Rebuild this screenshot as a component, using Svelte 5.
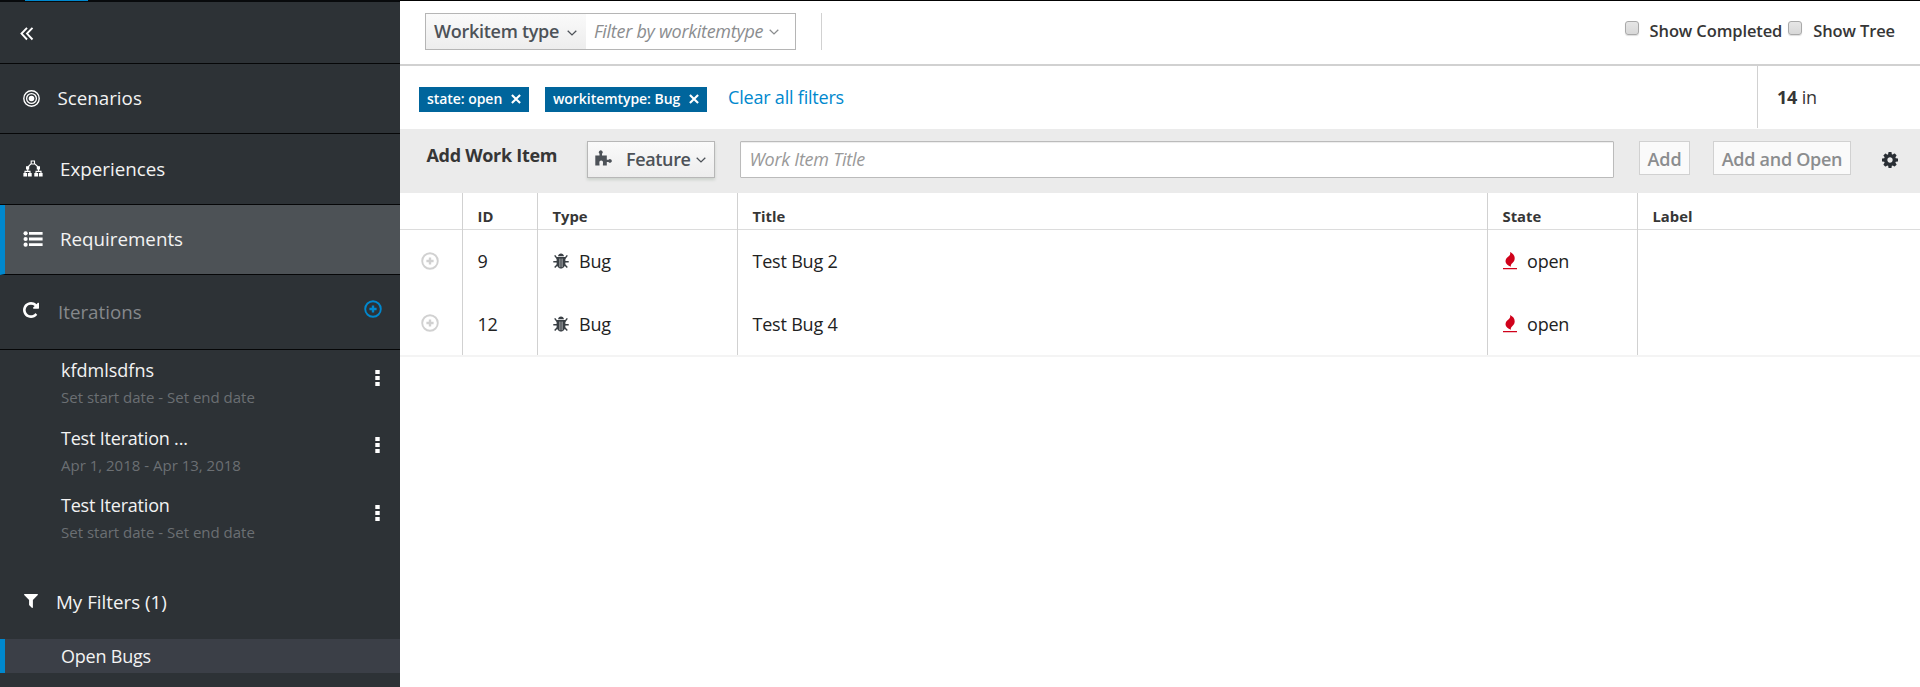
<script>
  const nav = [
    { icon: 'target', label: 'Scenarios', gap: 17.5, h: 69 },
    { icon: 'tree', label: 'Experiences', gap: 17, h: 70 },
    { icon: 'list', label: 'Requirements', gap: 17, h: 69, active: true },
  ];
  const iterations = [
    { name: 'kfdmlsdfns', dates: 'Set start date - Set end date', h: 68, tight: 0 },
    { name: 'Test Iteration ...', dates: 'Apr 1, 2018 - Apr 13, 2018', h: 67, tight: -0.2 },
    { name: 'Test Iteration', dates: 'Set start date - Set end date', h: 68, tight: -0.2 },
  ];
  const rows = [
    { id: 9, type: 'Bug', title: 'Test Bug 2', state: 'open' },
    { id: 12, type: 'Bug', title: 'Test Bug 4', state: 'open' },
  ];
  const chips = ['state: open', 'workitemtype: Bug'];
</script>

{#snippet chevron()}
  <svg class="chev" width="10" height="6" viewBox="0 0 10 6"><path d="M.7.7 5 4.9 9.3.7" fill="none" stroke="currentColor" stroke-width="1.3" /></svg>
{/snippet}

{#snippet plus()}
  <svg width="18" height="18" viewBox="0 0 18 18"><circle cx="9" cy="9" r="7.8" fill="none" stroke="currentColor" stroke-width="1.9" /><path d="M9 5.4v7.2M5.4 9h7.2" stroke="currentColor" stroke-width="2.4" /></svg>
{/snippet}

<div class="page">
  <aside>
    <div class="strip"><span></span></div>
    <div class="collapse">
      <svg width="14" height="14" viewBox="0 0 14 14"><path d="M7 .8 1.500 6.600 7 12.500M12.500.800 7 6.600l5.500 5.900" fill="none" stroke="#fff" stroke-width="1.900" /></svg>
    </div>
    {#each nav as n}
      <div class="nav" class:active={n.active} style="height:{n.h}px">
        {#if n.icon === 'target'}
          <svg width="17" height="17" viewBox="0 0 17 17"><g fill="none" stroke="#fff"><circle cx="8.500" cy="8.500" r="7.700" stroke-width="1.400" /><circle cx="8.500" cy="8.500" r="4.900" stroke-width="1.300" /></g><circle cx="8.500" cy="8.500" r="2.800" fill="#fff" /></svg>
        {:else if n.icon === 'tree'}
          <svg width="20" height="17" viewBox="0 0 20 17"><g fill="none" stroke="#fff" stroke-width="1.100"><path d="M8.200 1h3.300v3H8.200zM8.200 3.700 4.900 7M11.500 3.700 15.200 7M4.700 8v3M2 13.500V11.400h5v2.100M15.500 8v3M13 13.500v-2.100h5v2.100" /></g><g fill="#fff"><path d="M3 6.200h3.200v3.200H3zM13.800 6.200H17v3.200h-3.200zM.4 13h3.700v3.400H.4zM5 13h3.700v3.400H5zM11.300 13H15v3.400h-3.700zM15.900 13h3.700v3.400h-3.700z" /></g></svg>
        {:else}
          <svg width="20" height="16" viewBox="0 0 20 16"><g fill="#fff"><circle cx="2.600" cy="2.300" r="2.100" /><circle cx="2.600" cy="8" r="2.100" /><circle cx="2.600" cy="13.700" r="2.100" /><path d="M6 1h13.600v2.800H6zM6 6.600h13.600v2.800H6zM6 12.200h13.600V15H6z" /></g></svg>
        {/if}
        <span style="margin-left:{n.gap}px">{n.label}</span>
      </div>
    {/each}
    <div class="nav iter">
      <svg width="16" height="16" viewBox="128 128 1536 1536"><path fill="#fff" d="M1664 256v448q0 26-19 45t-45 19h-448q-42 0-59-40-17-39 14-69l138-138q-148-137-349-137-104 0-198.500 40.500t-163.500 109.500-109.500 163.500-40.500 198.500 40.500 198.500 109.500 163.500 163.500 109.500 198.500 40.500q119 0 225-52t179-147q7-10 23-12 15 0 25 9l137 138q9 8 9.500 20.500t-7.500 22.500q-109 132-264 204.500t-327 72.500q-156 0-298-61t-245-164-164-245-61-298 61-298 164-245 245-164 298-61q147 0 284.500 55.500t244.500 156.500l130-129q29-31 70-14 39 17 39 59z" /></svg>
      <span>Iterations</span>
      <i>{@render plus()}</i>
    </div>
    {#each iterations as it, k}
      <div class="it" style="height:{it.h}px">
        <div>
          <p style="letter-spacing:{it.tight}px">{it.name}</p>
          <small>{it.dates}</small>
        </div>
        <svg class:mid={k === 1} width="5" height="16" viewBox="0 0 5 16"><path fill="#fff" d="M.3 0h4.400v4H.3zM.3 6h4.400v4H.3zM.3 12h4.400v4H.3z" /></svg>
      </div>
    {/each}
    <div class="filters">
      <svg width="14" height="14" viewBox="192 256 1410 1410" preserveAspectRatio="none"><path fill="#fff" d="M1595 295q17 41-14 70l-493 493v742q0 42-39 59-13 5-25 5-27 0-45-19l-256-256q-19-19-19-45v-486l-493-493q-31-29-14-70 17-39 59-39h1280q42 0 59 39z" /></svg>
      <span>My Filters (1)</span>
    </div>
    <div class="saved">Open Bugs</div>
  </aside>

  <main>
    <div class="toolbar">
      <div class="query">
        <button class="kind"><span>Workitem type</span>{@render chevron()}</button>
        <div class="by"><span>Filter by workitemtype</span>{@render chevron()}</div>
      </div>
      <div class="sep"></div>
      <div class="checks">
        <b></b><span>Show Completed</span><b class="second"></b><span>Show Tree</span>
      </div>
    </div>

    <div class="applied">
      {#each chips as c}
        <div class="chip"><span>{c}</span><svg width="10" height="10" viewBox="0 0 10 10"><path d="M.9.9l8.200 8.200M9.100.9.900 9.100" stroke="#fff" stroke-width="2.100" /></svg></div>
      {/each}
      <a href="#clear">Clear all filters</a>
      <div class="count"><strong>14</strong> in</div>
    </div>

    <div class="add">
      <h2>Add Work Item</h2>
      <button class="feature">
        <svg width="17" height="16" viewBox="0 0 17 16"><path fill="#4d5258" d="M.3 5.600h4.200V3.700A1.900 1.900 0 1 1 7 3.700v1.900h4.800v4.200h1.700a1.800 1.800 0 1 1 0 2.200h-1.700v3.600H7.900v-1.300c.5-2.800-.3-3.900-1.700-3.900s-2.200 1.100-1.700 3.900v1.300H.3z" /></svg>
        <span>Feature</span>{@render chevron()}
      </button>
      <div class="title"><span>Work Item Title</span></div>
      <button class="off one">Add</button>
      <button class="off two">Add and Open</button>
      <svg class="gear" width="16" height="16" viewBox="128 128 1536 1536"><path fill="#292e34" d="M1152 896q0-106-75-181t-181-75-181 75-75 181 75 181 181 75 181-75 75-181zm512-109v222q0 12-8 23t-20 13l-185 28q-19 54-39 91 35 50 107 138 10 12 10 25t-9 23q-27 37-99 108t-94 71q-12 0-26-9l-138-108q-44 23-91 38-16 136-29 186-7 28-36 28h-222q-14 0-24.500-8.500t-11.500-21.500l-28-184q-49-16-90-37l-141 107q-10 9-25 9-14 0-25-11-126-114-165-168-7-10-7-23 0-12 8-23 15-21 51-66.500t54-70.500q-27-50-41-99l-183-27q-13-2-21-12.500t-8-23.500v-222q0-12 8-23t19-13l186-28q14-46 39-92-40-57-107-138-10-12-10-24 0-10 9-23 26-36 98.500-107.500t94.500-71.500q13 0 26 10l138 107q44-23 91-38 16-136 29-186 7-28 36-28h222q14 0 24.500 8.500t11.500 21.500l28 184q49 16 90 37l142-107q9-9 24-9 13 0 25 10 129 119 165 170 7 8 7 22 0 12-8 23-15 21-51 66.500t-54 70.500q26 50 41 98l183 28q13 2 21 12.500t8 23.500z" /></svg>
    </div>

    <div class="grid head">
      <div></div><div>ID</div><div>Type</div><div>Title</div><div>State</div><div>Label</div>
    </div>
    {#each rows as r}
      <div class="grid row">
        <div class="expand">{@render plus()}</div>
        <div>{r.id}</div>
        <div class="type">
          <svg width="16" height="16" viewBox="0 0 16 16"><path fill="#393f44" d="M5 3.300C5.200 1.400 6.400.400 8 .400s2.800 1 3 2.900zM3.600 4.100h8.800v5.400c0 3.600-1.600 6-4.400 6s-4.400-2.400-4.400-6z" /><path stroke="#fff" stroke-width=".6" d="M6.900 5.600v8.600M9.100 5.600v8.600" /><path fill="none" stroke="#393f44" stroke-width="1.500" d="M4.200 5.600 1.700 2.400M11.800 5.600l2.500-3.200M4 8.800H.3M12 8.800h3.700M4.500 11.500l-2.800 3M11.500 11.500l2.800 3" /></svg>
          <span>{r.type}</span>
        </div>
        <div>{r.title}</div>
        <div class="state">
          <svg width="14" height="18" viewBox="0 0 14 18"><path fill="#d0021b" d="M7 0c2.900 1.300 4.700 3.500 4.700 6.300 0 2.500-1.200 3.900-2.500 5-1 .9-1.600 1.700-1.300 3.500C4.900 13.600 2.500 11.700 2.500 9.300c0-2.400 1.600-3.700 3.200-5C7.100 3.100 7.600 1.800 7 0zM0 16h14v1.300H0z" /></svg>
          <span>{r.state}</span>
        </div>
        <div></div>
      </div>
    {/each}
    <div class="end"></div>
  </main>
</div>

<style>
  :global(body) { background: #fff; overflow: hidden; }
  .page { display: flex; width: 1920px; height: 687px; overflow: hidden; font: 18px/24px "Open Sans", sans-serif; color: #363636; }
  .page * { box-sizing: border-box; }
  svg { display: block; flex: none; }
  span, p, small, h2 { white-space: nowrap; }
  button { font: inherit; letter-spacing: inherit; padding: 0; margin: 0; border-radius: 0; }

  aside { width: 400px; flex: none; background: #2d3236; color: #f3f3f3; }
  .strip { height: 2px; background: #080a0c; }
  .strip span { display: block; width: 63px; height: 1px; margin-left: 25px; background: #0088ce; }
  .collapse { height: 62px; padding: 25px 0 0 20px; border-bottom: 1px solid #060708; }
  .page .nav { display: flex; align-items: center; box-sizing: content-box; padding-left: 23px; border-bottom: 1px solid #060708; font-size: 18.75px; }
  .nav > span { margin-top: -1px; }
  .nav > svg { margin-top: -1px; }
  .page .nav.active { background: #4d5256; border-left: 5px solid #0088ce; padding-left: 18px; }
  .page .iter { height: 74px; color: #85888b; }
  .iter > svg { margin-top: -4px; }
  .iter > span { margin: 0 0 0 19px; }
  .iter i { margin-left: auto; margin-right: 18.500px; margin-top: -7px; color: #0088ce; }
  .it { display: flex; justify-content: space-between; padding: 8px 20.500px 0 61px; }
  .it svg { margin-top: 12px; }
  .it svg.mid { margin-top: 11px; }
  p { margin: 0; line-height: 25px; }
  small { display: block; font-size: 15px; line-height: 28px; color: #6b6f73; }
  .filters { display: flex; align-items: center; height: 86px; padding: 12px 0 0 24px; font-size: 18.750px; }
  .filters svg { margin-top: -3px; }
  .filters span { margin-left: 18px; }
  .saved { height: 34px; border-left: 5px solid #0088ce; background: #3b3f47; padding-left: 56px; line-height: 34px; letter-spacing: -.22px; }

  main { width: 1520px; border-top: 1px solid #030303; background: #fff; letter-spacing: -.2px; }
  .toolbar { display: flex; height: 65px; padding: 12px 25px 0 25px; border-bottom: 2px solid #d1d1d1; }
  .query { display: flex; width: 371px; height: 37px; border: 1px solid #b5b5b5; }
  .kind { display: flex; align-items: center; width: 160px; padding-left: 8px; border: 0; color: #4d5258; font-weight: 600; letter-spacing: -.28px; background: linear-gradient(#fafafa, #ededed); }
  .kind span, .by span { margin-top: -1px; }
  .kind .chev { margin-left: 7.500px; margin-top: 3px; }
  .by { display: flex; align-items: center; padding-left: 8px; color: #8b8d8f; font-style: italic; letter-spacing: -.28px; }
  .by .chev { margin-left: 6px; }
  .sep { width: 1px; height: 37px; margin-left: 25px; background: #d1d1d1; }
  .checks { display: flex; margin-left: auto; font-size: 16.500px; font-weight: 600; letter-spacing: -.12px; }
  .checks span { margin-top: 6px; }
  .checks b { width: 14px; height: 14px; margin: 8px 11px 0 0; border: 1px solid #a9a9a9; border-radius: 3px; background: linear-gradient(#e6e6e6, #d8d8d8); box-shadow: 0 1px 1px #0002; }
  .checks b.second { margin-left: 6px; }
  .applied { display: flex; height: 63px; padding-left: 19px; }
  .chip { display: flex; align-items: center; justify-content: space-between; height: 25px; margin: 21px 16px 0 0; padding: 0 8px; background: #00659c; color: #fff; font-size: 14px; font-weight: 600; letter-spacing: -.05px; }
  .chip:first-child { width: 110px; }
  .chip:nth-child(2) { width: 162px; }
  .chip span { margin-top: -1px; }
  .chip svg { margin-top: -2px; }
  .applied a { margin: 19px 0 0 5px; color: #0088ce; text-decoration: none; white-space: nowrap; }
  .count { width: 163px; height: 62px; margin-left: auto; padding: 19px 0 0 19px; border-left: 1px solid #d1d1d1; }
  .count strong { font-weight: 700; }

  .add { display: flex; height: 64px; padding: 12px 0 0 26.500px; background: #ebebeb; }
  h2 { width: 160.500px; margin: 2px 0 0; font-size: 18px; line-height: 24px; font-weight: 700; letter-spacing: -.3px; }
  .feature { display: flex; align-items: center; width: 128px; height: 37px; padding-left: 7px; border: 1px solid #b7b7b7; color: #4d5258; font-weight: 600; background: linear-gradient(#fafafa, #ededed); box-shadow: 0 2px 3px #0302; }
  .feature > svg:first-child { margin-top: -3px; }
  .feature span { margin: -1px 0 0 14px; letter-spacing: -.35px; }
  .feature .chev { margin-left: 5.500px; }
  .title { width: 874px; height: 37px; margin-left: 25px; padding-left: 8.500px; border: 1px solid #bbb; border-radius: 1px; background: #fff; box-shadow: inset 0 1px 1px #00000013; line-height: 35px; color: #999; font-style: italic; letter-spacing: -.25px; }
  .off { height: 34px; border: 1px solid #d1d1d1; background: #fafafa; color: #8b8d8f; font-weight: 600; line-height: 24px; letter-spacing: -.28px; }
  .off { padding-top: 1px; }
  .one { width: 51px; margin-left: 25px; letter-spacing: -.1px; }
  .two { width: 138px; margin-left: 23px; }
  .gear { margin: 11px 0 0 31px; }

  .grid { display: grid; grid-template-columns: 62px 75px 200px 750px 150px 283px; }
  .grid > div { padding-left: 14.500px; border-left: 1px solid #d1d1d1; }
  .grid > div:first-child { border-left-color: transparent; }
  .head { height: 37px; border-bottom: 1px solid #dcdcdc; font-size: 14.800px; font-weight: 700; line-height: 47px; letter-spacing: 0; }
  .row { height: 62.500px; line-height: 62px; color: #222; }
  .row > .expand { display: flex; align-items: center; padding-left: 20px; color: #d1d1d1; }
  .expand :global(svg) { margin-top: -1px; }
  .type, .state { display: flex; align-items: center; }
  .type span { margin-left: 10.500px; }
  .state span { margin-left: 10.500px; }
  .end { height: 2px; background: #f4f4f4; }
</style>
